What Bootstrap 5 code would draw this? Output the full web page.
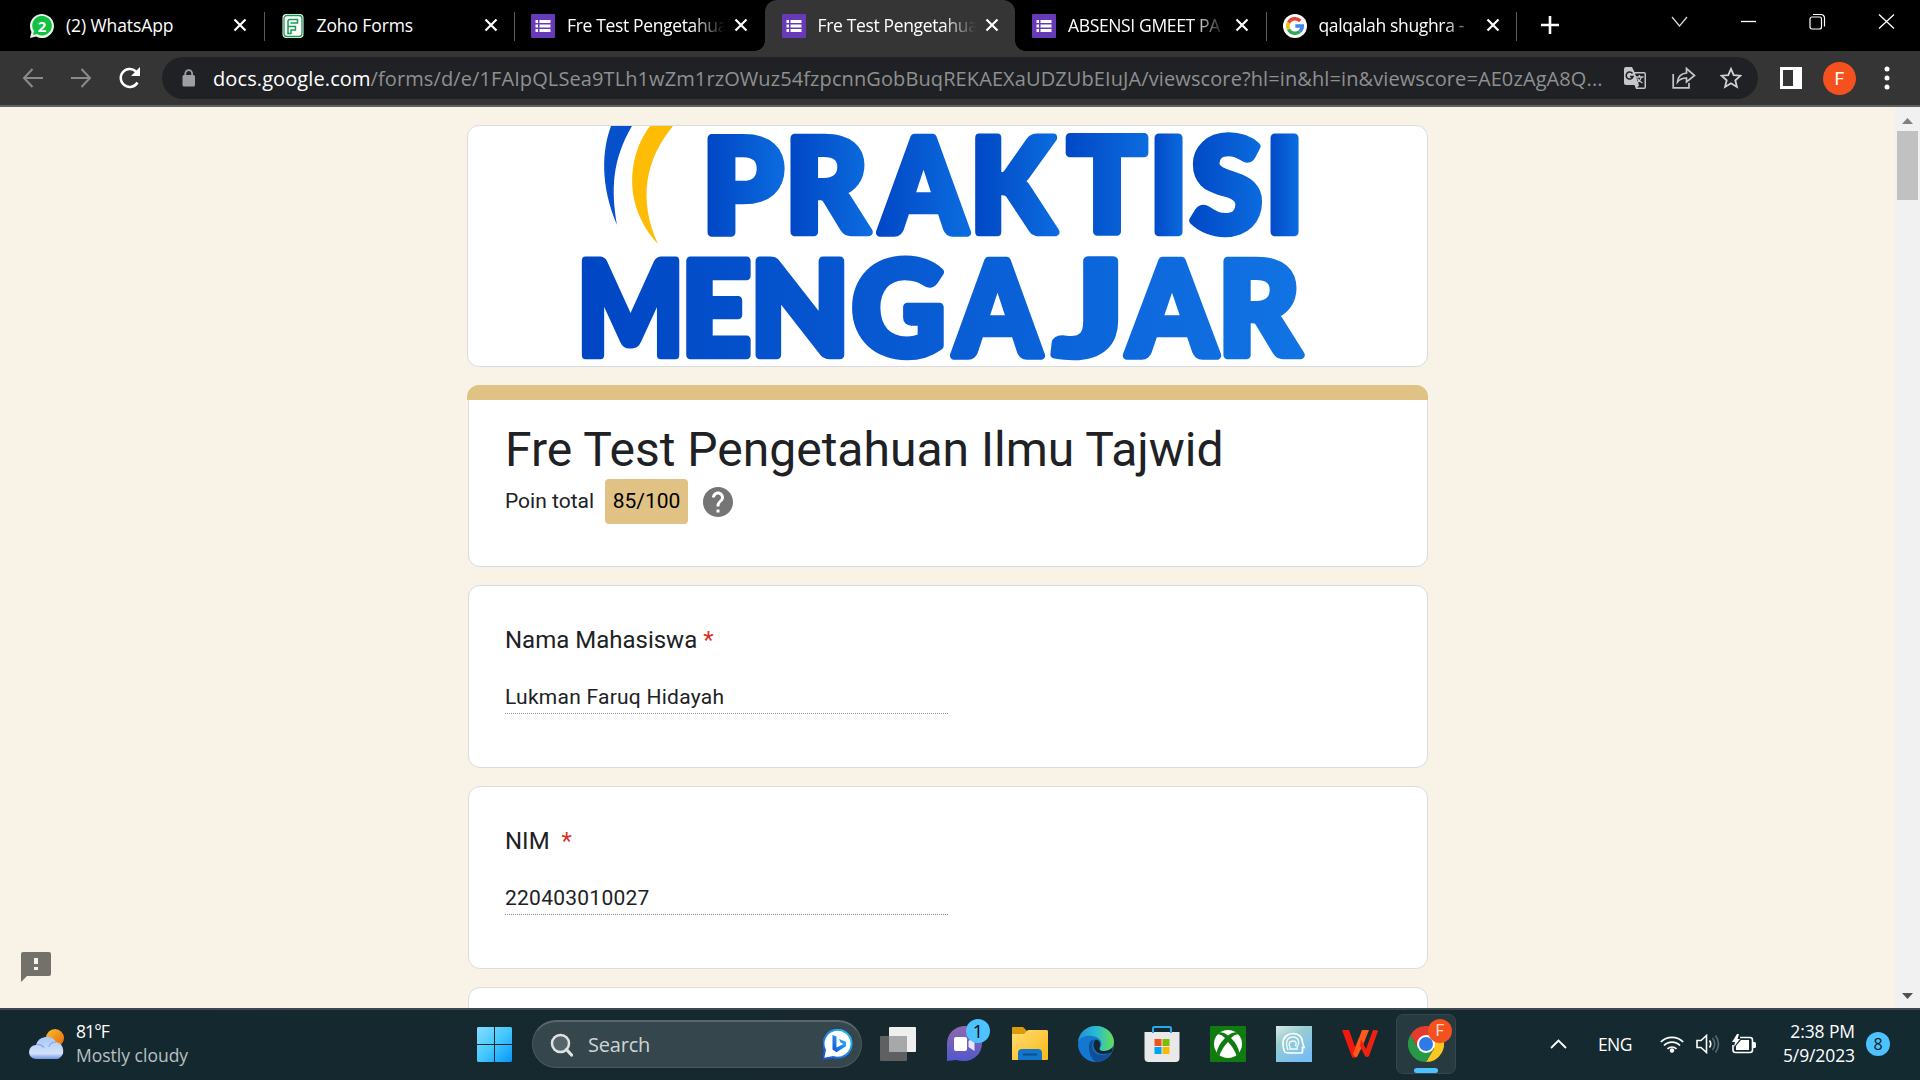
<!DOCTYPE html>
<html lang="id">
<head>
<meta charset="utf-8">
<title>Fre Test Pengetahuan Ilmu Tajwid</title>
<link rel="stylesheet" href="https://cdn.jsdelivr.net/npm/bootstrap@5.3.0/dist/css/bootstrap.min.css">
<style>
body{width:1920px;height:1080px;overflow:hidden;font-family:"Open Sans","Noto Sans",sans-serif;font-size:17px}
svg{display:block;flex:none}
.tabstrip{height:51px;background:#000;padding-left:13px}
.tab{width:250.5px;height:51px;padding:0 16px 0 17px;color:#fff;position:relative;flex:none}
.tab .fav{width:24px;height:24px;margin-right:12px}
.tab-title{width:160px;white-space:nowrap;letter-spacing:-.1px;font-size:17.5px;line-height:30px;padding-bottom:2px}
.tab-title.fade-end{letter-spacing:-.35px;-webkit-mask-image:linear-gradient(90deg,#000 125px,transparent 158px);mask-image:linear-gradient(90deg,#000 125px,transparent 158px)}
.tab .cls{margin-left:7px;margin-bottom:1px}
.tab.sep::after{content:"";position:absolute;right:-1px;top:12px;width:1px;height:29px;background:#5a5a5a}
.tab.on{background:#353535;border-radius:12px 12px 0 0}
.tab.on::before,.tab.on::after{content:"";position:absolute;bottom:0;width:10px;height:10px}
.tab.on::before{left:-10px;background:radial-gradient(circle at 0 0,transparent 9.5px,#353535 10px)}
.tab.on::after{right:-10px;background:radial-gradient(circle at 100% 0,transparent 9.5px,#353535 10px)}
.toolbar{height:56px;background:#353535;border-bottom:2px solid #5f6061;padding-left:22px}
.omni{width:1596px;height:42px;border-radius:21px;background:#202124;margin-left:20px;padding-left:20px;color:#8e9092;font-size:20px;white-space:nowrap}
.omni b{font-weight:400;color:#fff}
.url{width:1394px;margin-left:17px;line-height:30px;letter-spacing:.1px;padding-top:1px}
.avatar{width:33px;height:33px;background:#f4511e;color:#fff;font:18px Roboto,sans-serif}
.viewport{height:901px;background:#f9f2e6;overflow:hidden;font-family:Roboto,sans-serif;color:#202124;position:relative}
.formcol{width:960px;margin-left:468px;padding-top:18px;gap:18px;flex:none}
.fcard{background:#fff;border:1px solid #dadce0;border-radius:12px;flex:none;overflow:hidden}
.fcard.banner{height:242px;margin-left:-1px}
.fcard.q{height:183px;padding:36px 36px}
.head{height:182px;position:relative;overflow:visible;padding:35px 36px 0}
.band{position:absolute;left:-2px;right:-1px;top:-1px;height:15px;background:#e0c285;border-radius:12px 12px 0 0}
.ftitle{font-size:48px;line-height:58px;margin:0}
.pts{font-size:21px}
.score{background:#e0c285;border-radius:4px;width:83px;height:45px;color:#000}
.qlabel{font-size:24px;line-height:36px}
.req{color:#d93025}
.ans{font-size:21px;line-height:30px;width:443px;margin-top:24px;border-bottom:1px dotted #8c8c8c;letter-spacing:.25px;height:32px}
.sbar{width:25px;background:#f1f1f1;flex:none}
.thumb{width:21px;height:69px;background:#c1c1c1;margin-top:7px}
.feedback{position:absolute;left:21px;top:845px}
.taskbar{height:72px;background:linear-gradient(90deg,#13282f,#17292f 45%,#132a30);border-top:2px solid #3c484b;padding-bottom:2px;color:#fff;font-family:"Open Sans",sans-serif}
.weather{width:446px;padding-left:29px;gap:10px}
.tb-text{font-size:17.5px;line-height:24px;padding-bottom:2px}
.search{width:330px;height:48px;border-radius:24px;background:#35474d;border:1px solid #4a5a5f;border-top:2px solid #5a686d;padding:0 8px 0 17px;margin-left:20px;color:#d0d4d5;font-size:20px}
.apps{margin-left:3px}
.app{width:66px;height:60px;position:relative;flex:none}
.app.on{width:60px;background:#263a40;border:1px solid #35474c;border-radius:7px;margin-left:3px}
.app.on::after{content:"";position:absolute;left:17px;bottom:0;width:24px;height:5px;border-radius:3px;background:#4cc2ff}
.bub{position:absolute;border-radius:50%;width:24px;height:24px;font-size:16px;line-height:24px;text-align:center}
.num{width:24px;height:24px;border-radius:50%;background:#4cc2ff;color:#0b1c22;font-size:16px}
</style>
<script src="https://cdn.jsdelivr.net/npm/bootstrap@5.3.0/dist/js/bootstrap.bundle.min.js"></script>
</head>
<body class="d-flex flex-column">
<svg width="0" height="0" class="position-absolute">
<defs>
<symbol id="x" viewBox="0 0 14 14"><path d="M1.5 1.5l11 11M12.500 1.500l-11 11" stroke="#fff" stroke-width="2.200"/></symbol>
<symbol id="gf" viewBox="0 0 24 24"><rect width="24" height="24" rx="1" fill="#673ab7"/><path d="M8.500 6h11v3h-11zM8.500 10.500h11v3h-11zM8.500 15h11v3h-11zM4.500 6h2.500v3H4.500zM4.500 10.500h2.500v3H4.500zM4.500 15h2.500v3H4.500z" fill="#fff"/></symbol>
</defs></svg>

<div class="tabstrip d-flex">
  <div class="tab sep d-flex align-items-center">
    <svg class="fav" viewBox="0 0 24 24"><path d="M0 24l1.500-6A12 12 0 1 1 6 22.500z" fill="#e8f5ea"/><path d="M3 21l1-3.800A9.800 9.800 0 1 1 7 20z" fill="#12c143"/><text x="12" y="17.500" font-size="15" font-weight="700" fill="#fff" text-anchor="middle" font-family="Open Sans">2</text></svg>
    <div class="tab-title">(2) WhatsApp</div><svg class="cls" width="14" height="14"><use href="#x"/></svg>
  </div>
  <div class="tab sep d-flex align-items-center">
    <svg class="fav" viewBox="0 0 24 24"><rect x="1.500" width="21" height="24" rx="4" fill="#fff"/><rect x="3" y="1.500" width="18" height="21" rx="3" fill="none" stroke="#149b52" stroke-width="1.300"/><path d="M7 19.500V7.500a2 2 0 0 1 2-2h7.500v3.500H9.500M7 12.500h7.500V16H10v3.500H7z" fill="none" stroke="#149b52" stroke-width="1.500"/></svg>
    <div class="tab-title">Zoho Forms</div><svg class="cls" width="14" height="14"><use href="#x"/></svg>
  </div>
  <div class="tab d-flex align-items-center">
    <svg class="fav"><use href="#gf"/></svg>
    <div class="tab-title fade-end">Fre Test Pengetahua</div><svg class="cls" width="14" height="14"><use href="#x"/></svg>
  </div>
  <div class="tab on d-flex align-items-center">
    <svg class="fav"><use href="#gf"/></svg>
    <div class="tab-title fade-end">Fre Test Pengetahua</div><svg class="cls" width="14" height="14"><use href="#x"/></svg>
  </div>
  <div class="tab sep d-flex align-items-center">
    <svg class="fav"><use href="#gf"/></svg>
    <div class="tab-title fade-end">ABSENSI GMEET PA</div><svg class="cls" width="14" height="14"><use href="#x"/></svg>
  </div>
  <div class="tab sep d-flex align-items-center">
    <svg class="fav" viewBox="0 0 24 24"><circle cx="12" cy="12" r="12" fill="#fff"/><g fill="none" stroke-width="3.400"><path d="M17.300 7A7.300 7.300 0 0 0 5.500 8.700" stroke="#ea4335"/><path d="M5.500 8.700a7.300 7.300 0 0 0 0 6.600" stroke="#fbbc05"/><path d="M5.500 15.300A7.300 7.300 0 0 0 16.700 17.600" stroke="#34a853"/><path d="M16.700 17.600A7.300 7.300 0 0 0 19.300 12H12.300" stroke="#4285f4"/></g></svg>
    <div class="tab-title fade-end">qalqalah shughra -</div><svg class="cls" width="14" height="14"><use href="#x"/></svg>
  </div>
  <div class="d-flex" style="padding:16px 0 0 25px">
    <svg width="18" height="18"><path d="M9 0v18M0 9h18" stroke="#fff" stroke-width="2.600"/></svg>
  </div>
  <div class="d-flex flex-grow-1" style="padding:13px 0 0 112px;gap:52px">
    <svg width="17" height="18"><path d="M1 4l7.500 9L16 4" fill="none" stroke="#ddd" stroke-width="1.200"/></svg>
    <svg width="17" height="18"><path d="M1 8.500h15" stroke="#fff" stroke-width="1.300"/></svg>
    <svg width="17" height="18"><rect x="1" y="4" width="11.500" height="12" rx="2" fill="none" stroke="#fff" stroke-width="1.200"/><path d="M4 1.500h8a3.500 3.500 0 0 1 3.500 3.500v8.500" fill="none" stroke="#fff" stroke-width="1.200"/></svg>
    <svg width="17" height="18"><path d="M1 1.500l15 14M16 1.500l-15 14" stroke="#fff" stroke-width="1.300"/></svg>
  </div>
</div>

<div class="toolbar d-flex align-items-center">
  <svg width="22" height="22"><path d="M21 11H2M10.500 2L2 11l8.500 9" fill="none" stroke="#8b8b8b" stroke-width="2"/></svg>
  <svg width="22" height="22" style="margin-left:27px"><path d="M0 11h19M10.500 2l8.500 9-8.500 9" fill="none" stroke="#8b8b8b" stroke-width="2"/></svg>
  <svg width="24" height="24" style="margin-left:25px"><path d="M19.500 16.500A9 9 0 1 1 18 5.500" fill="none" stroke="#fff" stroke-width="2.500"/><path d="M22 1v9h-9z" fill="#fff"/></svg>
  <div class="omni d-flex align-items-center">
    <svg width="14" height="18"><rect x="0.500" y="6" width="12.500" height="11.500" rx="1.500" fill="#9aa0a6"/><path d="M3.300 7V4.500a3.400 3.400 0 0 1 6.800 0V7" fill="none" stroke="#9aa0a6" stroke-width="1.800"/></svg>
    <div class="url"><b>docs.google.com</b><span class="path">/forms/d/e/1FAIpQLSea9TLh1wZm1rzOWuz54fzpcnnGobBuqREKAEXaUDZUbEIuJA/viewscore?hl=in&amp;hl=in&amp;viewscore=AE0zAgA8Q...</span></div>
    <svg width="22" height="22" style="margin-left:17px"><path d="M2 0h6l2.500 5H20a2 2 0 0 1 2 2v13a2 2 0 0 1-2 2h-8l-1.500-4H2a2 2 0 0 1-2-2V2a2 2 0 0 1 2-2z" fill="#c4c7c9"/><path d="M11 6.500h9.500v14H13l2-2z" fill="#202124"/><path d="M12 10h7.500M15.500 8v2M17.500 10c-.5 3-2.500 4.500-4.500 6M13.500 11.500c1 2.500 3 3.500 5 4.500" stroke="#c4c7c9" stroke-width="1.300" fill="none"/><path d="M8.500 6.500A3.500 3.500 0 1 0 9 9.500H6" fill="none" stroke="#202124" stroke-width="1.600"/></svg>
    <svg width="24" height="22" style="margin-left:26px"><path d="M1.200 7v13.800H17V16" fill="none" stroke="#c4c7c9" stroke-width="1.700"/><path d="M5.500 15C6 9.500 9 6.500 14.500 6V1.500L22.500 8.500 14.500 15V11C10.500 11 7.500 12.500 5.500 15z" fill="none" stroke="#c4c7c9" stroke-width="1.700"/></svg>
    <svg width="22" height="22" style="margin-left:24px"><path d="M11 1.800l2.700 6.300 6.800.6-5.200 4.500 1.600 6.700L11 16.300l-5.900 3.600 1.600-6.700L1.500 8.700l6.800-.6z" fill="none" stroke="#d0d2d4" stroke-width="1.800"/></svg>
  </div>
  <svg width="22" height="22" style="margin-left:22px"><path d="M0 0h22v22H0zM3 3v16h10V3z" fill="#fff" fill-rule="evenodd"/></svg>
  <div class="avatar rounded-circle d-flex align-items-center justify-content-center" style="margin-left:21px">F</div>
  <svg width="6" height="24" style="margin-left:28px"><circle cx="3" cy="3" r="2.500" fill="#fff"/><circle cx="3" cy="12" r="2.500" fill="#fff"/><circle cx="3" cy="21" r="2.500" fill="#fff"/></svg>
</div>

<div class="viewport d-flex justify-content-between">
  <div class="formcol d-flex flex-column">
    <div class="fcard banner">
      <svg width="960" height="240" viewBox="468 126 960 240">
        <defs>
          <linearGradient id="g1" gradientUnits="userSpaceOnUse" x1="707" x2="1299" y1="0" y2="0">
            <stop offset="0" stop-color="#0046c4"/><stop offset=".135" stop-color="#0c6de0"/>
            <stop offset=".137" stop-color="#0046c4"/><stop offset=".28" stop-color="#0c6de0"/>
            <stop offset=".283" stop-color="#0046c4"/><stop offset=".445" stop-color="#0c6de0"/>
            <stop offset=".448" stop-color="#0046c4"/><stop offset=".598" stop-color="#0c6de0"/>
            <stop offset=".6" stop-color="#0046c4"/><stop offset=".748" stop-color="#0c6de0"/>
            <stop offset=".75" stop-color="#0046c4"/><stop offset=".808" stop-color="#0c6de0"/>
            <stop offset=".81" stop-color="#0046c4"/><stop offset=".942" stop-color="#0c6de0"/>
            <stop offset=".946" stop-color="#0046c4"/><stop offset="1" stop-color="#0c6de0"/>
          </linearGradient>
          <linearGradient id="g2" gradientUnits="userSpaceOnUse" x1="582" x2="1302" y1="0" y2="0"><stop offset="0" stop-color="#0046c4"/><stop offset="1" stop-color="#1173e4"/></linearGradient>
        </defs>
        <path d="M611 126C602 150 600 185 617 225C611 190 612 160 632 126z" fill="#0650cc"/>
        <path d="M650 126C628 155 622 205 658 244C638 200 645 160 673 126z" fill="#ffbc05"/>
        <g font-family="Lato" font-weight="900" font-size="129" stroke-width="8.500" stroke-linejoin="round">
          <text y="231.500" fill="url(#g1)" stroke="url(#g1)"><tspan x="702">P</tspan><tspan x="785" textLength="83" lengthAdjust="spacingAndGlyphs">R</tspan><tspan x="881" textLength="85" lengthAdjust="spacingAndGlyphs">A</tspan><tspan x="970" textLength="84" lengthAdjust="spacingAndGlyphs">K</tspan><tspan x="1068" textLength="78" lengthAdjust="spacingAndGlyphs">T</tspan><tspan x="1149">I</tspan><tspan x="1191">S</tspan><tspan x="1265">I</tspan></text>
          <text y="354.500" fill="url(#g2)" stroke="url(#g2)"><tspan x="577" textLength="107" lengthAdjust="spacingAndGlyphs">M</tspan><tspan x="681" textLength="70" lengthAdjust="spacingAndGlyphs">E</tspan><tspan x="750">N</tspan><tspan x="852">G</tspan><tspan x="955" textLength="85" lengthAdjust="spacingAndGlyphs">A</tspan><tspan x="1054" textLength="70" lengthAdjust="spacingAndGlyphs">J</tspan><tspan x="1128" textLength="88" lengthAdjust="spacingAndGlyphs">A</tspan><tspan x="1218" textLength="82" lengthAdjust="spacingAndGlyphs">R</tspan></text>
        </g>
      </svg>
    </div>
    <div class="fcard head"><div class="band"></div>
      <h1 class="ftitle fw-normal">Fre Test Pengetahuan Ilmu Tajwid</h1>
      <div class="pts d-flex align-items-center"><span style="width:100px">Poin total</span><span class="score d-flex align-items-center justify-content-center">85/100</span>
        <svg width="30" height="30" style="margin-left:15px" viewBox="2 2 20 20"><path fill="#757575" d="M12 2C6.480 2 2 6.480 2 12s4.480 10 10 10 10-4.480 10-10S17.520 2 12 2zm1 17h-2v-2h2v2zm2.070-7.750l-.9.920C13.450 12.900 13 13.500 13 15h-2v-.5c0-1.100.45-2.100 1.170-2.830l1.240-1.260c.37-.36.590-.86.590-1.410 0-1.100-.9-2-2-2s-2 .9-2 2H8c0-2.210 1.790-4 4-4s4 1.790 4 4c0 .88-.36 1.680-.93 2.250z"/></svg>
      </div>
    </div>
    <div class="fcard q"><div class="qlabel">Nama Mahasiswa <span class="req">*</span></div><div class="ans">Lukman Faruq Hidayah</div></div>
    <div class="fcard q"><div class="qlabel">NIM&nbsp; <span class="req">*</span></div><div class="ans">220403010027</div></div>
    <div class="fcard q"></div>
  </div>
  <div class="sbar d-flex flex-column align-items-center">
    <svg width="11" height="6" style="margin-top:11px"><path d="M0 6L5.500 0 11 6z" fill="#808080"/></svg>
    <div class="thumb"></div>
    <svg width="11" height="6" class="mt-auto" style="margin-bottom:9px"><path d="M0 0h11L5.500 6z" fill="#505050"/></svg>
  </div>
  <svg class="feedback" width="30" height="30"><path d="M2 0h26a2 2 0 0 1 2 2v20a2 2 0 0 1-2 2H6l-6 6V2a2 2 0 0 1 2-2zM13 6v6h4V6zm0 9v3h4v-3z" fill="#74706a" fill-rule="evenodd"/></svg>
</div>

<div class="taskbar d-flex align-items-center">
  <div class="weather d-flex align-items-center">
    <svg width="37" height="32"><defs><linearGradient id="su" x1="0" x2="1" y2="1"><stop stop-color="#f5c330"/><stop offset="1" stop-color="#ee6306"/></linearGradient><linearGradient id="cl" x2="0" y2="1"><stop stop-color="#a9c6f5"/><stop offset=".75" stop-color="#d3e2fa"/><stop offset="1" stop-color="#6e97e6"/></linearGradient></defs><circle cx="26" cy="10" r="9" fill="url(#su)"/><path d="M7 31a7 7 0 0 1 0-14 11 11 0 0 1 20-3 9 9 0 0 1 2 17z" fill="url(#cl)"/><path d="M7 16.500q5-.5 8 3M27 14q-6 0-7 5" stroke="#84a9ec" fill="none" stroke-width="1.200"/></svg>
    <div class="tb-text"><div style="letter-spacing:-.9px">81°F</div><div style="color:#b9c0c2">Mostly cloudy</div></div>
  </div>
  <svg width="35" height="35" style="margin-left:31px"><defs><linearGradient id="wn" gradientUnits="userSpaceOnUse" x1="0" y1="0" x2="35" y2="35"><stop stop-color="#85defe"/><stop offset=".5" stop-color="#44c8fd"/><stop offset="1" stop-color="#0795fb"/></linearGradient></defs><path d="M1 0h16v17H0V1zM18 0h16l1 1v16H18zM0 18h17v17H1l-1-1zM18 18h17v16l-1 1H18z" fill="url(#wn)"/></svg>
  <div class="search d-flex align-items-center">
    <svg width="23" height="24"><circle cx="10.500" cy="10.500" r="8.500" fill="#56656a" stroke="#dfe3e4" stroke-width="2.500"/><path d="M16.500 16.500l5 5.500" stroke="#dfe3e4" stroke-width="3.200" stroke-linecap="round"/></svg>
    <span style="margin-left:15px;letter-spacing:-.2px">Search</span>
    <svg class="ms-auto" width="30" height="31"><defs><linearGradient id="bg" x1="1" x2="0" y2="1"><stop stop-color="#28c3f2"/><stop offset="1" stop-color="#174be0"/></linearGradient></defs><path d="M0 30l2-9A14 14 0 1 1 10 28z" fill="#fff" stroke="url(#bg)" stroke-width="2"/><path d="M9.500 6l4 1.500v11l7-3.500-3-1.500-1.500-3.500 7 2.800v4.500l-9.500 6-4-2.800z" fill="url(#bg)"/></svg>
  </div>
  <div class="apps d-flex">
    <div class="app d-flex align-items-center justify-content-center"><svg width="36" height="34"><rect y="9" width="27" height="25" rx="1" fill="#5e6061"/><rect x="9" width="27" height="25" rx="1" fill="#efefef"/><path d="M9 9h18v16H9z" fill="#a7a9a9"/></svg></div>
    <div class="app d-flex align-items-center justify-content-center"><svg width="36" height="36"><defs><linearGradient id="te" x2="0" y2="1"><stop stop-color="#9168b0"/><stop offset="1" stop-color="#5058cc"/></linearGradient></defs><path d="M1 35V18a17.500 17.500 0 1 1 17 17q-4 0-8-1z" fill="url(#te)"/><rect x="8" y="11" width="13" height="14" rx="2" fill="#fff"/><path d="M22.500 15l6-4v14l-6-4z" fill="#e8e5fc"/></svg><span class="bub" style="left:35px;top:5px;background:#4cc2ff;color:#000;font-size:18px">1</span></div>
    <div class="app d-flex align-items-center justify-content-center"><svg width="36" height="34"><defs><linearGradient id="fo" x2="1" y2="1"><stop stop-color="#ffdd70"/><stop offset="1" stop-color="#f9b81a"/></linearGradient></defs><path d="M0 1q0-1 1-1h10l4 4H36v5H0z" fill="#dc9b08"/><path d="M0 7h12l4-4h19l1 1v28q0 1-1 1H0z" fill="url(#fo)"/><path d="M6 33v-7q0-4 4-4h16q4 0 4 4v7z" fill="#1275c7"/><path d="M11 27.500h14" stroke="#0b4f91" stroke-width="2"/></svg></div>
    <div class="app d-flex align-items-center justify-content-center"><svg width="36" height="36"><defs><linearGradient id="eg" x2="1"><stop stop-color="#238fd3"/><stop offset=".5" stop-color="#29bad4"/><stop offset="1" stop-color="#66df50"/></linearGradient></defs><circle cx="18" cy="18" r="18" fill="#1477d0"/><path d="M0 16C1 6 9 0 18 0c11 0 18 8 18 16 0 6-5 9-10 9-4 0-5-2-4-3 4-5 0-11-8-12C7 9 2 12 0 16z" fill="url(#eg)"/><path d="M11 21c0-5 3-8 5-7-4 6-1 15 8 15 4 0 7-2 9-2-4 6-9 9-15 9-4-2-7-8-7-15z" fill="#104f98"/><path d="M17 14c3-1 6 2 5 6-1 3-1 5 4 5 4 0 7-2 9-4l-1 5c-2 1-5 2-9 2-8 0-12-8-8-14z" fill="#14272e"/></svg></div>
    <div class="app d-flex align-items-center justify-content-center"><svg width="36" height="36"><path d="M9 8V2.500Q9 1 10.500 1h15Q27 1 27 2.500V8" fill="none" stroke="#29a9ec" stroke-width="2"/><path d="M.5 6h35v26a4 4 0 0 1-4 4h-27a4 4 0 0 1-4-4z" fill="#e9e9e9"/><path d="M9 7V5M27 7V5" stroke="#29a9ec" stroke-width="2"/><path d="M10.500 13h7v7h-7z" fill="#f1511b"/><path d="M18.500 13h7v7h-7z" fill="#80bb03"/><path d="M10.500 21h7v7h-7z" fill="#00a3ee"/><path d="M18.500 21h7v7h-7z" fill="#fdb902"/></svg></div>
    <div class="app d-flex align-items-center justify-content-center"><svg width="36" height="36"><rect width="36" height="36" rx="1" fill="#107c10"/><circle cx="18" cy="18" r="14" fill="#fff"/><path d="M9 6.500q4-1 9 3 5-4 9-3l2 2q-4-1-8 3.500 7 7 8.500 15l-3 2.500Q24 22 18 16 12 22 9.500 29.500l-3-2.500Q8 19 15 12q-4-4.500-8-3.500z" fill="#107c10"/></svg></div>
    <div class="app d-flex align-items-center justify-content-center"><svg width="36" height="36"><defs><linearGradient id="qu" x2=".6" y2="1"><stop stop-color="#dce9e8"/><stop offset=".4" stop-color="#97cdd0"/><stop offset="1" stop-color="#78bdf5"/></linearGradient></defs><path d="M0 0h36v36H0z" fill="url(#qu)"/><path d="M9 26c-2-3-2-6-2-9 0-6 5-9.500 10-9.500 6 0 9.500 4 9.500 9l1.500 5h-1.500v4.500q0 1-1.500 1H18q-9 0-9-1" fill="none" stroke="#fff" stroke-width="1.700"/><path d="M12 24c-3-8-1-13 5-13s7 6 4 10v2h-7v-2c-2-2-1-6 3-6 3.500 0 4 3 2 5" fill="none" stroke="#eefafc" stroke-width="1.400"/></svg></div>
    <div class="app d-flex align-items-center justify-content-center"><svg width="36" height="28"><path d="M0 0h7l6 17 4-9 3 7-6 12q-2 2-4 0z" fill="#f3180d"/><path d="M20 0h7l-6 15-6 12q-2 1-4-3z" fill="#ff5a1c"/><path d="M19 9l5 10L31 0q5 0 5 1L27 26q-2 2-4 0l-5-10z" fill="#ee2111"/></svg></div>
    <div class="app on d-flex align-items-center justify-content-center"><svg width="36" height="36"><path d="M2.400 9A18 18 0 0 1 33.600 9H18L10 22.500z" fill="#e33b2e"/><path d="M18 36A18 18 0 0 0 33.600 9H18l8 13.500z" fill="#fcc720"/><path d="M2.400 9A18 18 0 0 0 18 36l8-13.500-8 4-7.800-4z" fill="#279847"/><circle cx="18" cy="18" r="9" fill="#fff"/><circle cx="18" cy="18" r="7" fill="#2f79e8"/></svg><span class="bub" style="left:31px;top:4px;background:#f4511e;color:#ffd9cb;font-family:Roboto">F</span></div>
  </div>
  <div class="d-flex align-items-center flex-grow-1">
    <svg width="17" height="10" style="margin-left:94px"><path d="M1 9l7.500-7.500L16 9" fill="none" stroke="#fff" stroke-width="1.800"/></svg>
    <span style="width:62px;margin-left:31px;letter-spacing:-.6px;font-size:17.500px">ENG</span>
    <svg width="24" height="18"><g fill="none" stroke="#fff" stroke-width="1.700"><path d="M.8 7a16 16 0 0 1 22.400 0M4 10.500a11 11 0 0 1 16 0M7.500 13.800a6.500 6.500 0 0 1 9 0"/></g><circle cx="12" cy="15.500" r="2.200" fill="#fff"/></svg>
    <svg width="24" height="20" style="margin-left:12px"><path d="M1 6.500h4L10.500 1.500v17L5 13.500H1z" fill="none" stroke="#fff" stroke-width="1.600"/><path d="M13.500 6.500q2.500 3.500 0 7" stroke="#fff" stroke-width="1.600" fill="none"/><path d="M16.500 4q4.500 6 0 12M19.500 1.500q6 8.500 0 17" stroke="#5b6a6e" stroke-width="1.600" fill="none"/></svg>
    <svg width="24" height="20" style="margin-left:12px"><path d="M8 3.500h10q2.500 0 2.500 2.500v10q0 2.500-2.500 2.500H3.500Q1 18.500 1 16v-5" fill="none" stroke="#fff" stroke-width="1.600"/><path d="M21 8h1.500q1.500 0 1.500 1.500v3q0 1.500-1.500 1.500H21zM4 16v-4l5-6h8v10zM5 0L0 8h3L2 13l6-8H5.500L7 0z" fill="#fff"/></svg>
    <div class="text-end tb-text" style="width:99px;letter-spacing:-.1px">2:38 PM<br>5/9/2023</div>
    <span class="num d-flex align-items-center justify-content-center" style="margin-left:11px">8</span>
  </div>
</div>
</body>
</html>
